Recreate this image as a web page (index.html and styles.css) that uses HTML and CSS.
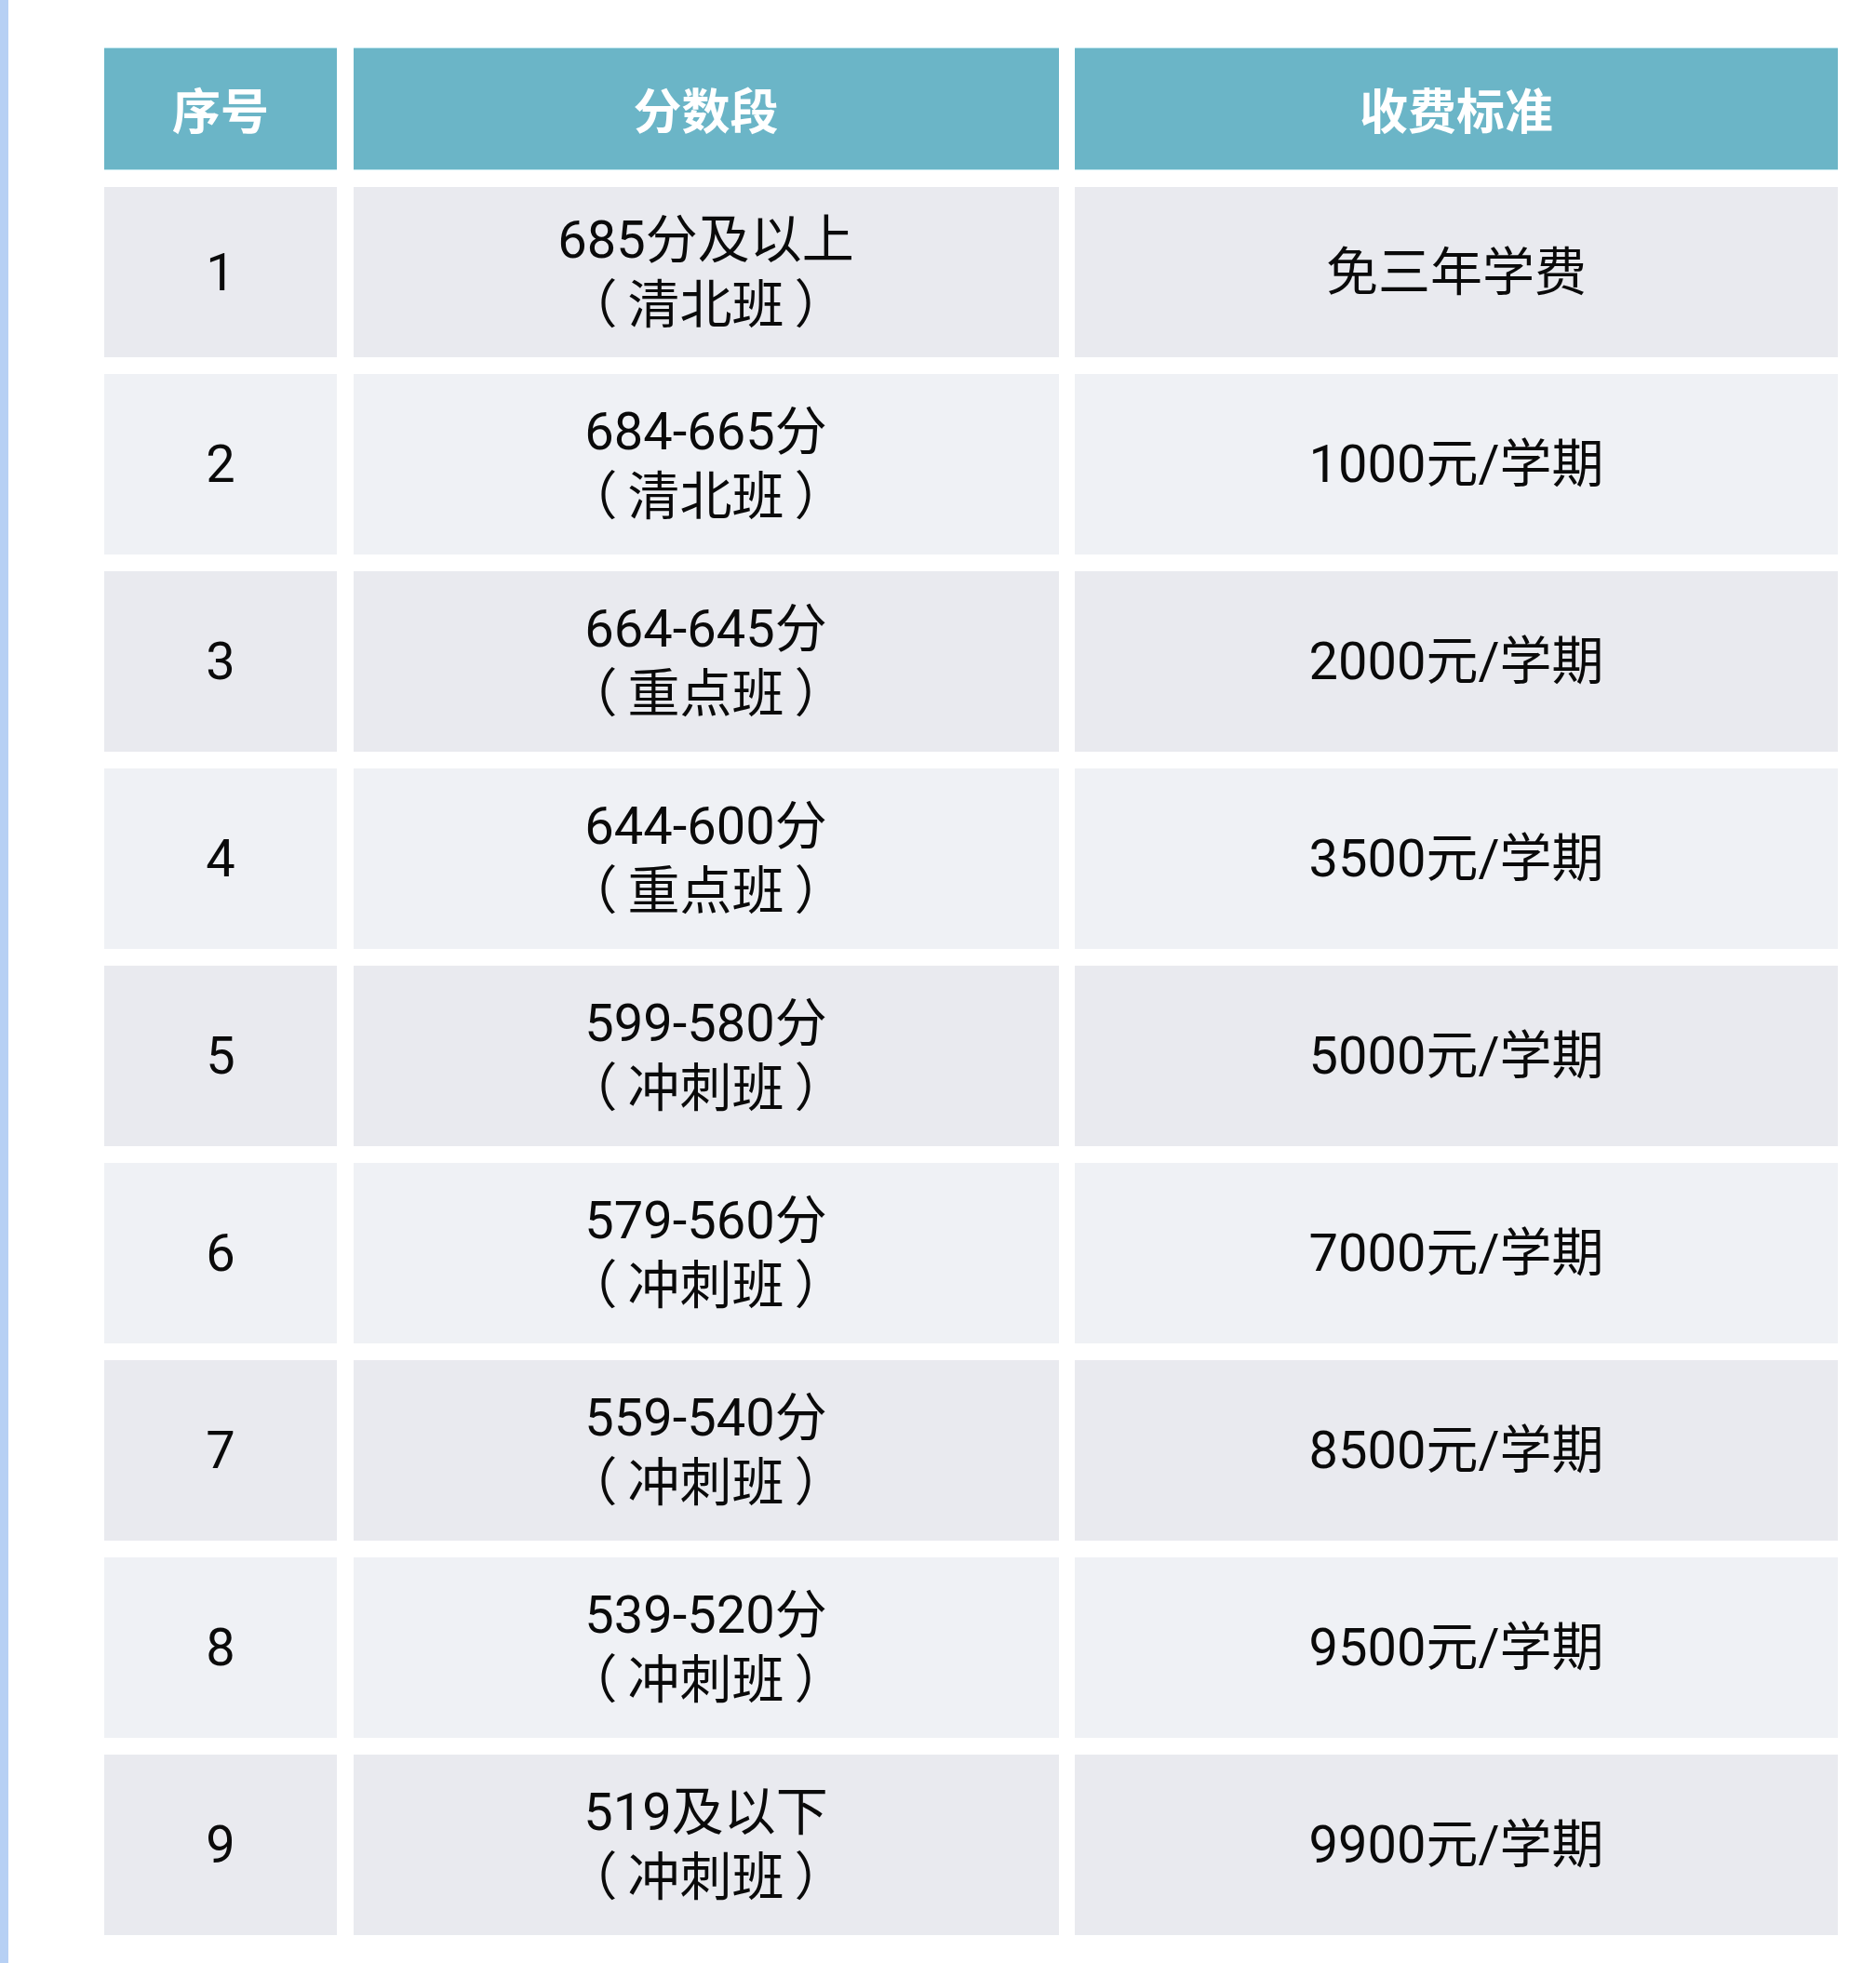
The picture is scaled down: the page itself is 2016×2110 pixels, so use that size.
FILE: index.html
```html
<!DOCTYPE html>
<html lang="zh-CN">
<head>
<meta charset="utf-8">
<title>收费标准</title>
<link rel="stylesheet" href="styles.css">
</head>
<body>
<div class="page">
  <div class="side-bar"></div>
  <main class="main">
    <div class="fee-table">
      <div class="cell head">序号</div>
      <div class="cell head">分数段</div>
      <div class="cell head">收费标准</div>

      <div class="cell odd">1</div>
      <div class="cell odd"><span class="line">685分及以上</span><span class="line"><span class="po">（</span>清北班<span class="pc">）</span></span></div>
      <div class="cell odd">免三年学费</div>

      <div class="cell even">2</div>
      <div class="cell even"><span class="line">684-665分</span><span class="line"><span class="po">（</span>清北班<span class="pc">）</span></span></div>
      <div class="cell even">1000元/学期</div>

      <div class="cell odd">3</div>
      <div class="cell odd"><span class="line">664-645分</span><span class="line"><span class="po">（</span>重点班<span class="pc">）</span></span></div>
      <div class="cell odd">2000元/学期</div>

      <div class="cell even">4</div>
      <div class="cell even"><span class="line">644-600分</span><span class="line"><span class="po">（</span>重点班<span class="pc">）</span></span></div>
      <div class="cell even">3500元/学期</div>

      <div class="cell odd">5</div>
      <div class="cell odd"><span class="line">599-580分</span><span class="line"><span class="po">（</span>冲刺班<span class="pc">）</span></span></div>
      <div class="cell odd">5000元/学期</div>

      <div class="cell even">6</div>
      <div class="cell even"><span class="line">579-560分</span><span class="line"><span class="po">（</span>冲刺班<span class="pc">）</span></span></div>
      <div class="cell even">7000元/学期</div>

      <div class="cell odd">7</div>
      <div class="cell odd"><span class="line">559-540分</span><span class="line"><span class="po">（</span>冲刺班<span class="pc">）</span></span></div>
      <div class="cell odd">8500元/学期</div>

      <div class="cell even">8</div>
      <div class="cell even"><span class="line">539-520分</span><span class="line"><span class="po">（</span>冲刺班<span class="pc">）</span></span></div>
      <div class="cell even">9500元/学期</div>

      <div class="cell odd">9</div>
      <div class="cell odd"><span class="line">519及以下</span><span class="line"><span class="po">（</span>冲刺班<span class="pc">）</span></span></div>
      <div class="cell odd">9900元/学期</div>
    </div>
  </main>
</div>
</body>
</html>
```

FILE: styles.css
```css
* {
  box-sizing: border-box;
}

html, body {
  margin: 0;
  padding: 0;
  background: #ffffff;
}

body {
  font-family: Roboto, "Noto Sans CJK SC", sans-serif;
  color: #0a0a0a;
}

.page {
  display: flex;
  min-height: 2110px;
}

.side-bar {
  width: 9px;
  flex: 0 0 9px;
  background: #b7d0f4;
}

.main {
  flex: 1;
  padding: 51px 0 0 103px;
}

.fee-table {
  display: grid;
  grid-template-columns: 250px 758px 820px;
  grid-template-rows: 132px 183px repeat(8, 194px);
  column-gap: 17.5px;
  row-gap: 18px;
}

.cell {
  display: flex;
  flex-direction: column;
  align-items: center;
  justify-content: center;
  text-align: center;
  font-size: 56px;
  line-height: 70px;
  font-weight: 400;
}

.line {
  display: block;
  white-space: nowrap;
}

.po {
  margin-right: 11px;
}

.pc {
  margin-left: 11px;
}

.head {
  background: #6bb5c7;
  color: #ffffff;
  font-family: "Noto Sans CJK SC", sans-serif;
  font-size: 52px;
  font-weight: 700;
  border-top: 1px solid #bfe6ee;
  border-bottom: 1px solid #bfe6ee;
}

.odd {
  background: #e9eaef;
}

.even {
  background: #eff1f5;
}
```
